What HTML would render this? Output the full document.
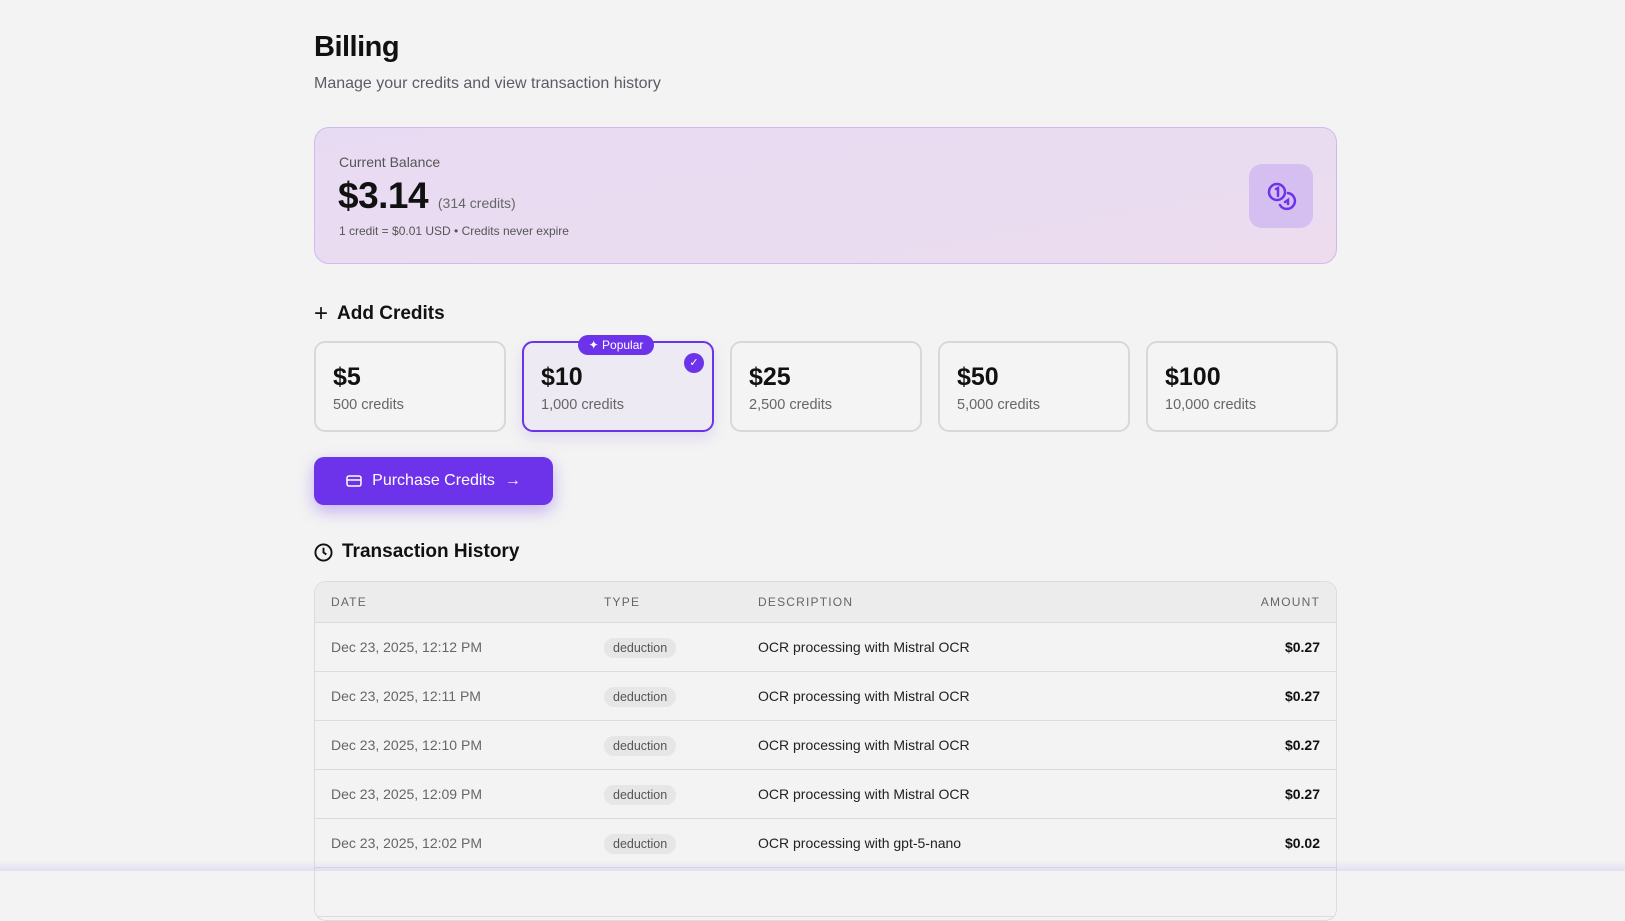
<!DOCTYPE html>
<html><head><meta charset="utf-8"><style>
*{box-sizing:border-box;margin:0;padding:0}
body{width:1625px;height:871px;overflow:hidden;background:#f3f3f3;font-family:"Liberation Sans",sans-serif;color:#111;position:relative}
.a{position:absolute}
h1{position:absolute;left:314px;top:31px;font-size:29px;font-weight:700;letter-spacing:-0.5px}
.sub{left:314px;top:75px;font-size:16px;color:#5b5b66}
.bal{left:314px;top:127px;width:1023px;height:137px;border:1px solid #d3b8f0;border-radius:15px;background:linear-gradient(170deg,#e7dbf3,#ecdcee)}
.card{top:341px;width:192px;height:91px;border:2px solid #d8d8d8;border-radius:11px;background:#f4f4f4}
.card b{position:absolute;left:17px;top:20px;font-size:25px;font-weight:700}
.card span{position:absolute;left:17px;top:54px;font-size:14.5px;color:#666}
.sel{border-color:#6a34e8;background:#eeeaf4;box-shadow:0 6px 14px rgba(120,80,220,.15)}
.btn{left:314px;top:457px;width:239px;height:48px;border-radius:10px;background:#6d33ea;color:#fff;font-size:16px;box-shadow:0 6px 16px rgba(109,51,234,.35);display:flex;align-items:center;justify-content:center;gap:10px}
.tbl{left:314px;top:581px;width:1023px;height:340px;border:1px solid #dcdcdc;border-radius:12px;overflow:hidden;background:#f3f3f3}
.hd{height:41px;background:#ececec;border-bottom:1px solid #dcdcdc;position:relative;font-size:12px;letter-spacing:1.2px;color:#666}
.hd div,.row div{position:absolute;top:50%;transform:translateY(-50%)}
.row{height:49px;border-bottom:1px solid #dcdcdc;position:relative;font-size:14px}
.c1{left:16px;color:#666}.c2{left:289px}.c3{left:443px;color:#222}.c4{right:16px;font-weight:600}
.hd .c1,.hd .c3{color:#666}.hd .c4{font-weight:400}
.tag{background:#e6e6e6;border-radius:10px;padding:3px 9px;font-size:12.5px;color:#555}
</style></head><body>
<h1>Billing</h1>
<div class="a sub">Manage your credits and view transaction history</div>
<div class="a bal">
 <div class="a" style="left:24px;top:26px;font-size:14px;color:#555">Current Balance</div>
 <div class="a" style="left:23px;top:47px;font-size:37px;font-weight:700;letter-spacing:-0.5px">$3.14 <span style="font-size:14px;font-weight:400;color:#666;letter-spacing:0">(314 credits)</span></div>
 <div class="a" style="left:24px;top:96px;font-size:12px;color:#555">1 credit = $0.01 USD • Credits never expire</div>
 <div class="a" style="left:934px;top:36px;width:64px;height:64px;border-radius:13px;background:#d5bff0">
  <svg width="64" height="64" viewBox="0 0 64 64" fill="none" stroke="#6d33ea" stroke-width="2.5" stroke-linecap="round"><circle cx="28" cy="28" r="8"/><path d="M27 25l2-1v8"/><path d="M39 29a8 8 0 1 1-8 12"/><path d="M36 38l3-2v4"/></svg>
 </div>
</div>
<div class="a" style="left:314px;top:298px;font-size:19px;font-weight:700"><span style="font-weight:300;font-size:24px;position:relative;top:2px;margin-right:9px">+</span>Add Credits</div>
<div class="a card" style="left:314px"><b>$5</b><span>500 credits</span></div>
<div class="a card sel" style="left:522px"><b>$10</b><span>1,000 credits</span>
 <div class="a" style="left:54px;top:-8px;width:76px;height:20px;border-radius:10px;background:#6d33ea;color:#fff;font-size:12px;line-height:20px;text-align:center">✦ Popular</div>
 <div class="a" style="right:8px;top:10px;width:20px;height:20px;border-radius:50%;background:#6d33ea;color:#fff;font-size:11px;line-height:20px;text-align:center">✓</div>
</div>
<div class="a card" style="left:730px"><b>$25</b><span>2,500 credits</span></div>
<div class="a card" style="left:938px"><b>$50</b><span>5,000 credits</span></div>
<div class="a card" style="left:1146px"><b>$100</b><span>10,000 credits</span></div>
<div class="a btn"><svg width="16" height="14" viewBox="0 0 16 14" fill="none" stroke="#fff" stroke-width="1.5"><rect x="1" y="2" width="14" height="10" rx="2"/><path d="M1 6h14"/></svg>Purchase Credits <span>→</span></div>
<div class="a" style="left:314px;top:541px;font-size:19px;font-weight:700;display:flex;align-items:center;gap:9px"><svg width="19" height="19" viewBox="0 0 20 20" fill="none" stroke="#111" stroke-width="2"><circle cx="10" cy="10" r="8.5"/><path d="M10 5v5l3 2"/></svg>Transaction History</div>
<div class="a tbl">
 <div class="hd"><div class="c1">DATE</div><div class="c2">TYPE</div><div class="c3">DESCRIPTION</div><div class="c4">AMOUNT</div></div>
 <div class="row"><div class="c1">Dec 23, 2025, 12:12 PM</div><div class="c2"><span class="tag">deduction</span></div><div class="c3">OCR processing with Mistral OCR</div><div class="c4">$0.27</div></div>
 <div class="row"><div class="c1">Dec 23, 2025, 12:11 PM</div><div class="c2"><span class="tag">deduction</span></div><div class="c3">OCR processing with Mistral OCR</div><div class="c4">$0.27</div></div>
 <div class="row"><div class="c1">Dec 23, 2025, 12:10 PM</div><div class="c2"><span class="tag">deduction</span></div><div class="c3">OCR processing with Mistral OCR</div><div class="c4">$0.27</div></div>
 <div class="row"><div class="c1">Dec 23, 2025, 12:09 PM</div><div class="c2"><span class="tag">deduction</span></div><div class="c3">OCR processing with Mistral OCR</div><div class="c4">$0.27</div></div>
 <div class="row"><div class="c1">Dec 23, 2025, 12:02 PM</div><div class="c2"><span class="tag">deduction</span></div><div class="c3">OCR processing with gpt-5-nano</div><div class="c4">$0.02</div></div>
 <div class="row"></div>
</div>
<div class="a" style="left:0;bottom:0;width:1625px;height:10px;background:linear-gradient(transparent,rgba(180,160,240,.25))"></div>
</body></html>
